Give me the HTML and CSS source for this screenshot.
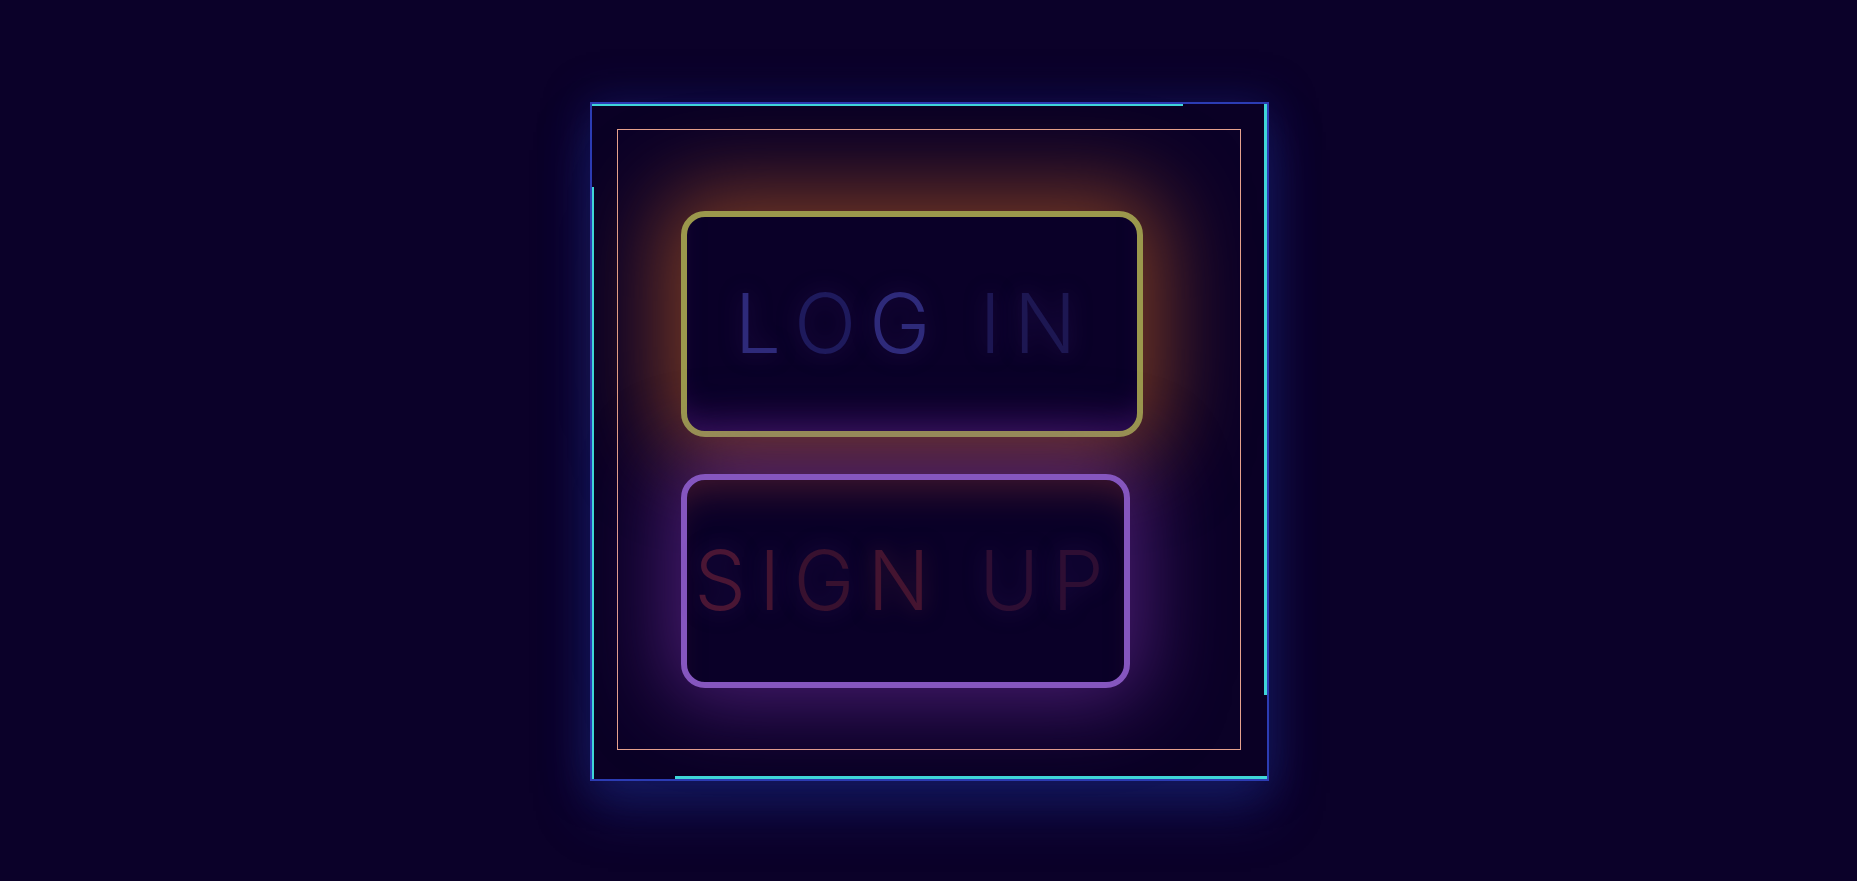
FILE: index.html
```html
<!DOCTYPE html>
<html lang="en">
<head>
<meta charset="utf-8">
<title>Neon Login</title>
<link rel="stylesheet" href="styles.css">
</head>
<body>
<main class="stage">
  <div class="frame">
    <span class="run run-top"></span>
    <span class="run run-right"></span>
    <span class="run run-bottom"></span>
    <span class="run run-left"></span>
    <div class="inner">
      <button class="btn btn-login" type="button">
        <span class="l l1">L</span><span class="l l2">O</span><span class="l l3">G</span><span class="l l4"> </span><span class="l l5">I</span><span class="l l6">N</span>
      </button>
      <button class="btn btn-signup" type="button">
        <span class="s s1">S</span><span class="s s2">I</span><span class="s s3">G</span><span class="s s4">N</span><span class="s s5"> </span><span class="s s6">U</span><span class="s s7">P</span>
      </button>
    </div>
  </div>
</main>
</body>
</html>
```

FILE: styles.css
```css
html, body {
  margin: 0;
  padding: 0;
  height: 100%;
}
body {
  background: #0b0129;
  font-family: "Inter", "Lato", sans-serif;
}
.stage {
  height: 881px;
  display: flex;
  align-items: center;
  justify-content: center;
}
.frame {
  position: relative;
  box-sizing: border-box;
  width: 679px;
  height: 679px;
  margin-left: 2px;
  margin-top: 2px;
  border: 2px solid #2c3cb4;
  background: #0a0025;
  padding: 25px 26px 29px 25px;
  display: flex;
  box-shadow: 0 0 40px 4px rgba(25, 40, 130, 0.35), 0 30px 50px 0 rgba(30, 50, 150, 0.4);
}
.run {
  position: absolute;
  background: #3fd6d8;
}
.run-top { top: 0; left: 0; width: 591px; height: 2px; }
.run-right { top: 0; right: 0; width: 3px; height: 591px; }
.run-bottom { bottom: 0; right: 0; width: 592px; height: 3px; }
.run-left { bottom: 0; left: 0; width: 2px; height: 592px; }
.inner {
  flex: 1;
  border: 1px solid #e6a28e;
  background: #0b0127;
  padding: 81px 0 0 63px;
  display: flex;
  flex-direction: column;
  align-items: flex-start;
  gap: 37px;
}
.btn {
  box-sizing: border-box;
  border-radius: 24px;
  background: #0a0028;
  font-family: "Inter", "Lato", sans-serif;
  font-weight: 350;
  font-size: 82px;
  letter-spacing: 13px;
  padding: 0;
  display: flex;
  align-items: center;
  justify-content: center;
  white-space: pre;
  line-height: 1;
  cursor: pointer;
}
.btn-login {
  width: 462px;
  height: 226px;
  border: 6px solid #9b984c;
  box-shadow: 0 0 85px 20px rgba(190, 95, 32, 0.62), inset 0 -25px 30px -15px rgba(70, 20, 110, 0.55);
}
.btn-signup {
  width: 449px;
  height: 214px;
  border: 6px solid #8556bf;
  box-shadow: 0 0 80px 14px rgba(125, 52, 175, 0.55), inset 0 30px 35px -20px rgba(110, 40, 50, 0.55);
}
.l, .s {
  text-shadow: 0 0 22px rgba(60, 30, 110, 0.45);
}
.l1 { color: #2e2a7a; }
.l2 { color: #1e1a5c; }
.l3 { color: #2e2a7a; }
.l5 { color: #1c1652; }
.l6 { color: #1d1752; }
.s1 { color: #4a1634; }
.s2 { color: #441430; }
.s3 { color: #38112f; }
.s4 { color: #441430; text-shadow: 0 0 22px rgba(90, 40, 60, 0.5); }
.s6 { color: #2e0e33; }
.s7 { color: #2e0e33; }
```
